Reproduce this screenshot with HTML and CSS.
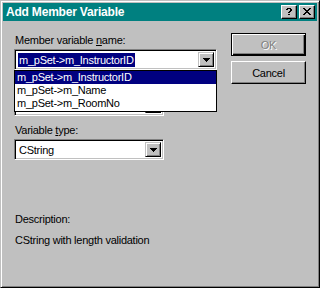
FILE: index.html
```html
<!DOCTYPE html>
<html>
<head>
<meta charset="utf-8">
<link rel="stylesheet" href="styles.css">
</head>
<body>
<div class="window">
  <div class="titlebar">
    <span class="title">Add Member Variable</span>
    <div class="caption-buttons">
      <span class="cap-btn help">
        <svg width="6" height="7" viewBox="0 0 6 7" shape-rendering="crispEdges"><path d="M1 0h4v1H1zM0 1h2v1H0zM4 1h2v2H4zM3 3h2v1H3zM2 4h2v1H2zM2 6h2v1H2z" fill="#000"/></svg>
      </span>
      <span class="cap-btn close">
        <svg width="8" height="7" viewBox="0 0 8 7" shape-rendering="crispEdges"><path d="M0 0h2v1H0zM6 0h2v1H6zM1 1h2v1H1zM5 1h2v1H5zM2 2h4v1H2zM3 3h2v1H3zM2 4h4v1H2zM1 5h2v1H1zM5 5h2v1H5zM0 6h2v1H0zM6 6h2v1H6z" fill="#000"/></svg>
      </span>
    </div>
  </div>
  <div class="client">
    <div class="fields">
      <div class="label first">Member variable <u>n</u>ame:</div>
      <div class="combo-wrap">
        <div class="combo wide">
          <div class="combo-text"><span class="selected">m_pSet-&gt;m_InstructorID</span></div>
          <span class="drop-btn"><svg class="arrow" width="7" height="4" viewBox="0 0 7 4" shape-rendering="crispEdges"><path d="M0 0h7v1H0zM1 1h5v1H1zM2 2h3v1H2zM3 3h1v1H3z" fill="#000"/></svg></span>
        </div>
        <ul class="listbox">
          <li class="item active">m_pSet-&gt;m_InstructorID</li>
          <li class="item">m_pSet-&gt;m_Name</li>
          <li class="item">m_pSet-&gt;m_RoomNo</li>
        </ul>
      </div>
      <div class="label-space"></div>
      <div class="combo narrow hidden-combo">
        <div class="combo-text"></div>
        <span class="drop-btn"><svg class="arrow" width="7" height="4" viewBox="0 0 7 4" shape-rendering="crispEdges"><path d="M0 0h7v1H0zM1 1h5v1H1zM2 2h3v1H2zM3 3h1v1H3z" fill="#000"/></svg></span>
      </div>
      <div class="label vartype">Variable <u>t</u>ype:</div>
      <div class="combo narrow typecombo">
        <div class="combo-text">CString</div>
        <span class="drop-btn"><svg class="arrow" width="7" height="4" viewBox="0 0 7 4" shape-rendering="crispEdges"><path d="M0 0h7v1H0zM1 1h5v1H1zM2 2h3v1H2zM3 3h1v1H3z" fill="#000"/></svg></span>
      </div>
      <div class="label desc">Description:</div>
      <div class="label desc-text">CString with length validation</div>
    </div>
    <div class="buttons">
      <div class="btn default disabled"><span>OK</span></div>
      <div class="btn">Cancel</div>
    </div>
  </div>
</div>
</body>
</html>
```
FILE: styles.css
```css
* { box-sizing: border-box; }
html, body { margin: 0; padding: 0; }
body {
  width: 320px;
  height: 288px;
  overflow: hidden;
  background: #c0c0c0;
  font-family: "Liberation Sans", Arial, sans-serif;
  font-size: 11px;
  color: #000;
}
.window {
  width: 320px;
  height: 288px;
  background: #c0c0c0;
  border: 1px solid;
  border-color: #c0c0c0 #000 #000 #c0c0c0;
  box-shadow: inset 1px 1px #fff, inset -1px -1px #808080;
  padding: 2px;
  display: flex;
  flex-direction: column;
}
.titlebar {
  height: 18px;
  background: #008080;
  display: flex;
  align-items: center;
  justify-content: space-between;
  padding: 0 2px 0 3px;
  flex: none;
}
.title {
  color: #fff;
  font-weight: bold;
  font-size: 12px;
  letter-spacing: -0.2px;
  line-height: 18px;
}
.caption-buttons { display: flex; gap: 2px; }
.cap-btn {
  width: 16px;
  height: 14px;
  background: #c0c0c0;
  border: 1px solid;
  border-color: #fff #000 #000 #fff;
  box-shadow: inset -1px -1px #808080;
  display: flex;
  align-items: center;
  justify-content: center;
  padding-bottom: 1px;
}
.cap-btn svg { display: block; }
.client {
  flex: 1;
  display: flex;
  padding: 12px 0 0 11px;
  gap: 14px;
}
.fields {
  width: 203px;
  display: flex;
  flex-direction: column;
}
.label {
  height: 13px;
  line-height: 13px;
  letter-spacing: -0.25px;
  white-space: nowrap;
  padding-left: 1px;
}
.label.first { margin-top: 1px; }
.label-space { height: 13px; margin-top: 8px; }
.label.vartype { margin-top: 8px; }
.label.desc { margin-top: 53px; }
.label.desc-text { margin-top: 8px; }
.combo-wrap { position: relative; margin-top: 2px; }
.combo {
  height: 21px;
  background: #fff;
  border: 1px solid;
  border-color: #808080 #fff #fff #808080;
  box-shadow: inset 1px 1px #000, inset -1px -1px #c0c0c0;
  padding: 2px;
  display: flex;
  align-items: stretch;
}
.combo.wide { width: 203px; }
.combo.narrow { width: 150px; }
.combo.hidden-combo { margin-top: 4px; }
.combo.typecombo { margin-top: 2px; }
.combo-text {
  flex: 1;
  line-height: 17px;
  padding-left: 2px;
  letter-spacing: -0.25px;
  white-space: nowrap;
  overflow: hidden;
}
.combo-text .selected {
  background: #000080;
  color: #fff;
  padding: 1px;
  margin-left: -1px;
}
.drop-btn {
  width: 16px;
  flex: none;
  background: #c0c0c0;
  border: 1px solid;
  border-color: #c0c0c0 #000 #000 #c0c0c0;
  box-shadow: inset 1px 1px #fff, inset -1px -1px #808080;
  display: flex;
  align-items: center;
  justify-content: center;
}
.arrow { display: block; }
.listbox {
  position: absolute;
  left: 0;
  top: 21px;
  width: 203px;
  height: 42px;
  margin: 0;
  padding: 0;
  list-style: none;
  background: #fff;
  border: 1px solid #000;
  z-index: 2;
}
.item {
  height: 13px;
  line-height: 13px;
  padding-left: 2px;
  letter-spacing: -0.25px;
  white-space: nowrap;
}
.item.active { background: #000080; color: #fff; }
.buttons {
  width: 75px;
  display: flex;
  flex-direction: column;
  gap: 5px;
}
.btn {
  height: 23px;
  background: #c0c0c0;
  border: 1px solid;
  border-color: #fff #000 #000 #fff;
  box-shadow: inset -1px -1px #808080;
  display: flex;
  align-items: center;
  justify-content: center;
  letter-spacing: -0.25px;
}
.btn.default {
  border: 1px solid #000;
  box-shadow: inset 1px 1px #fff, inset -1px -1px #000, inset -2px -2px #808080;
}
.btn.disabled span {
  color: #808080;
  text-shadow: 1px 1px #fff;
}
```
